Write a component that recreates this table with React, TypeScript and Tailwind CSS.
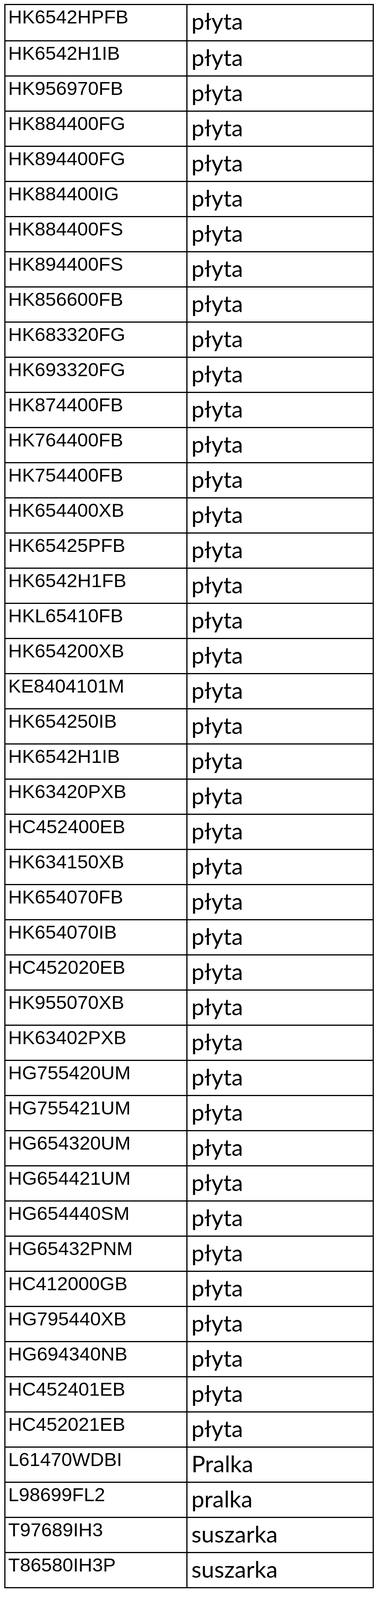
const rows: [string, string][] = [
  ['HK6542HPFB', 'płyta'],
  ['HK6542H1IB', 'płyta'],
  ['HK956970FB', 'płyta'],
  ['HK884400FG', 'płyta'],
  ['HK894400FG', 'płyta'],
  ['HK884400IG', 'płyta'],
  ['HK884400FS', 'płyta'],
  ['HK894400FS', 'płyta'],
  ['HK856600FB', 'płyta'],
  ['HK683320FG', 'płyta'],
  ['HK693320FG', 'płyta'],
  ['HK874400FB', 'płyta'],
  ['HK764400FB', 'płyta'],
  ['HK754400FB', 'płyta'],
  ['HK654400XB', 'płyta'],
  ['HK65425PFB', 'płyta'],
  ['HK6542H1FB', 'płyta'],
  ['HKL65410FB', 'płyta'],
  ['HK654200XB', 'płyta'],
  ['KE8404101M', 'płyta'],
  ['HK654250IB', 'płyta'],
  ['HK6542H1IB', 'płyta'],
  ['HK63420PXB', 'płyta'],
  ['HC452400EB', 'płyta'],
  ['HK634150XB', 'płyta'],
  ['HK654070FB', 'płyta'],
  ['HK654070IB', 'płyta'],
  ['HC452020EB', 'płyta'],
  ['HK955070XB', 'płyta'],
  ['HK63402PXB', 'płyta'],
  ['HG755420UM', 'płyta'],
  ['HG755421UM', 'płyta'],
  ['HG654320UM', 'płyta'],
  ['HG654421UM', 'płyta'],
  ['HG654440SM', 'płyta'],
  ['HG65432PNM', 'płyta'],
  ['HC412000GB', 'płyta'],
  ['HG795440XB', 'płyta'],
  ['HG694340NB', 'płyta'],
  ['HC452401EB', 'płyta'],
  ['HC452021EB', 'płyta'],
  ['L61470WDBI', 'Pralka'],
  ['L98699FL2', 'pralka'],
  ['T97689IH3', 'suszarka'],
  ['T86580IH3P', 'suszarka'],
];

export default function App() {
  return (
    <div className="min-h-[4203px] bg-white pt-[10px] pl-[11px]">
      <div className="w-[946px] border-[3px] border-black text-black">
        {rows.map(([model, kind], i) => (
          <div key={i} className={`flex h-[90px] ${i > 0 ? 'border-t-[3px] border-black' : ''}`}>
            <div className="w-[466px] shrink-0 border-r-[3px] border-black pl-[7px] pt-[6px]">
              <span className="font-['Liberation_Sans',Arial,sans-serif] text-[49px] leading-none">{model}</span>
            </div>
            <div className="flex-1 pl-[10px] pt-[11px]">
              <span className="font-['Lato','Noto_Sans',sans-serif] text-[59px] leading-none">{kind}</span>
            </div>
          </div>
        ))}
      </div>
    </div>
  );
}
